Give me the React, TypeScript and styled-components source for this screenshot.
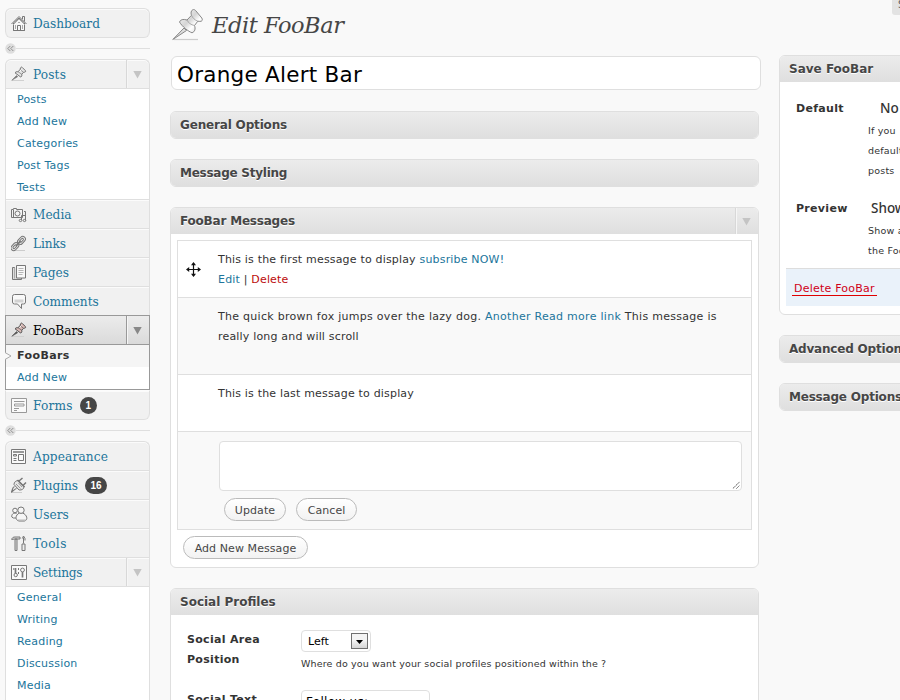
import React from "react";
import styled, { createGlobalStyle, css } from "styled-components";

const sans = `"DejaVu Sans", Verdana, sans-serif`;
const serif = `"DejaVu Serif Condensed", "DejaVu Serif", Georgia, serif`;
const blue = "#21759b";

const GlobalStyle = createGlobalStyle`
  * { box-sizing: border-box; }
  body {
    margin: 0;
    background: #f9f9f9;
    color: #333;
    font-family: ${sans};
    font-size: 11px;
    overflow: hidden;
  }
`;

const Page = styled.div`
  display: flex;
  width: 900px;
  height: 700px;
  overflow: hidden;
  position: relative;
`;

/* ---------- sidebar ---------- */

const Sidebar = styled.nav`
  flex: 0 0 145px;
  margin-left: 5px;
  padding-top: 8px;
`;

const Group = styled.div`
  border-bottom: 1px solid #dfdfdf;
  border-radius: 6px;
`;

const MenuRow = styled.div<{ $first?: boolean; $last?: boolean; $active?: boolean; $plainTop?: boolean }>`
  display: flex;
  align-items: center;
  height: 29px;
  padding-left: 5px;
  border: 1px solid #dfdfdf;
  border-bottom: 0;
  background: #f1f1f1;
  box-shadow: inset 0 1px 0 #fbfbfb;
  border-radius: ${(p) => (p.$first ? "6px 6px" : "0 0")} ${(p) => (p.$last ? "6px 6px" : "0 0")};
  ${(p) => p.$plainTop && css`border-top-color: #fcfcfc;`}
  ${(p) =>
    p.$active &&
    css`
      border-color: #999;
      background: linear-gradient(#ececec, #dadada);
      box-shadow: none;
    `}
`;

const IconSlot = styled.span`
  display: flex;
  align-items: center;
  width: 17px;
  height: 17px;
  margin-right: 5px;
`;

const MenuLabel = styled.span<{ $active?: boolean; $spacing?: number }>`
  font-family: ${serif};
  font-size: 13.5px;
  line-height: 26px;
  white-space: nowrap;
  letter-spacing: ${(p) => p.$spacing ?? 0}px;
  color: ${(p) => (p.$active ? "#000" : blue)};
`;

const Count = styled.span`
  display: flex;
  align-items: center;
  justify-content: center;
  min-width: 17px;
  height: 17px;
  margin-left: 7px;
  padding: 0 5.5px;
  border-radius: 9px;
  background: #464646;
  color: #fff;
  font: bold 10px "Liberation Sans", sans-serif;
`;

const Toggle = styled.span<{ $active?: boolean }>`
  display: flex;
  align-items: center;
  justify-content: center;
  align-self: stretch;
  width: 23px;
  margin-left: auto;
  padding: 2px 1px 0 0;
  border-left: 1px solid ${(p) => (p.$active ? "#999" : "#d8d8d8")};
  box-shadow: inset 1px 0 0 #f6f6f6;
  color: ${(p) => (p.$active ? "#888" : "#c4c4c4")};
`;

const Submenu = styled.div<{ $active?: boolean; $tail?: boolean }>`
  border: 1px solid ${(p) => (p.$active ? "#999" : "#dfdfdf")};
  ${(p) => !p.$active && css`border-bottom: 0;`}
  ${(p) => p.$tail && css`padding-bottom: 24px;`}
  background: #fff;
`;

const SubItem = styled.div<{ $current?: boolean }>`
  position: relative;
  height: 22px;
  padding-left: 11px;
  line-height: 21px;
  white-space: nowrap;
  letter-spacing: ${(p) => (p.$current ? 0.4 : 0.2)}px;
  color: ${(p) => (p.$current ? "#333" : blue)};
  font-weight: ${(p) => (p.$current ? "bold" : "normal")};
  background: ${(p) => (p.$current ? "#f5f5f5" : "transparent")};
`;

const CurrentNotch = styled.svg`
  position: absolute;
  left: -1px;
  top: 7px;
`;

const Separator = styled.div`
  display: flex;
  align-items: center;
  height: 21px;
  &::after {
    content: "";
    flex: 1;
    height: 1px;
    background: #dfdfdf;
  }
`;

/* ---------- main column ---------- */

const Main = styled.main`
  flex: 0 0 591px;
  margin-left: 20px;
`;

const Heading = styled.h1`
  display: flex;
  align-items: center;
  height: 56px;
  margin: 0;
  padding: 0 0 7px 2px;
  font-family: "DejaVu Serif", Georgia, serif;
  font-size: 22.5px;
  font-style: italic;
  font-weight: normal;
  letter-spacing: -0.45px;
  color: #464646;
  svg { margin-right: 8px; }
`;

const TitleInput = styled.div`
  width: 590px;
  height: 34px;
  margin: 0 0 21px 1px;
  padding-left: 5px;
  border: 1px solid #dfdfdf;
  border-radius: 6px;
  background: #fff;
  color: #000;
  font-size: 21.5px;
  letter-spacing: 0.25px;
  line-height: 35px;
`;

const Card = styled.section<{ $height?: number }>`
  width: 589px;
  ${(p) => p.$height && css`height: ${p.$height}px;`}
  margin-bottom: 20px;
  border: 1px solid #dfdfdf;
  border-radius: 6px;
  background: #fff;
  overflow: hidden;
`;

const CardHeader = styled.h3<{ $spacing?: number }>`
  display: flex;
  align-items: center;
  height: 26px;
  margin: 0;
  padding-left: 9px;
  background: linear-gradient(#ececec, #dfdfdf);
  color: #464646;
  font-size: 12px;
  line-height: 28px;
  white-space: nowrap;
  letter-spacing: ${(p) => p.$spacing ?? 0}px;
  text-shadow: 0 1px 0 #fff;
`;

const HeaderText = styled.span`
  padding-top: 1px;
  line-height: 25px;
`;

const Messages = styled.div`
  margin: 6px 6px 0;
  border: 1px solid #dfdfdf;
`;

const Message = styled.div<{ $height: number; $alt?: boolean }>`
  display: flex;
  height: ${(p) => p.$height}px;
  background: ${(p) => (p.$alt ? "#f9f9f9" : "#fff")};
  & + & { border-top: 1px solid #dfdfdf; }
`;

const Handle = styled.div`
  flex: 0 0 40px;
  padding: 21px 0 0 8px;
`;

const MessageText = styled.div`
  padding-top: 9px;
  width: 520px;
  line-height: 20px;
  letter-spacing: 0.18px;
`;

const WideLine = styled.span`
  letter-spacing: 0.28px;
`;

const Link = styled.a<{ $danger?: boolean }>`
  color: ${(p) => (p.$danger ? "#bc0b0b" : blue)};
`;

const Editor = styled.div`
  padding: 9px 0 0 1px;
`;

const TextArea = styled.div`
  display: flex;
  align-items: flex-end;
  justify-content: flex-end;
  width: 523px;
  height: 50px;
  padding: 0 1px 1px 0;
  border: 1px solid #dfdfdf;
  border-radius: 4px;
  background: #fff;
`;

const Buttons = styled.div`
  display: flex;
  gap: 10px;
  padding: 7px 0 0 5px;
`;

const Button = styled.button<{ $width: number }>`
  width: ${(p) => p.$width}px;
  height: 23px;
  padding: 1px 0 0;
  border: 1px solid #bbb;
  border-radius: 12px;
  background: linear-gradient(#fff, #f2f2f2);
  color: #464646;
  font: 11px ${sans};
  letter-spacing: 0.08px;
  white-space: nowrap;
`;

const CardFooter = styled.div`
  padding: 6px 0 0 12px;
`;

const Form = styled.div`
  display: grid;
  grid-template-columns: 114px 1fr;
  padding: 15px 0 0 16px;
`;

const FieldLabel = styled.div`
  width: 90px;
  font-weight: bold;
  line-height: 20px;
  letter-spacing: 0.3px;
`;

const Field = styled.div`
  height: 60px;
`;

const Select = styled.div`
  display: flex;
  align-items: center;
  justify-content: space-between;
  width: 70px;
  height: 22px;
  padding: 0 2px 0 6px;
  border: 1px solid #dfdfdf;
  border-radius: 4px;
  color: #000;
`;

const SelectButton = styled.span`
  display: flex;
  align-items: center;
  justify-content: center;
  width: 17px;
  height: 16px;
  padding-top: 2px;
  border: 1px solid #707070;
  background: linear-gradient(#f4f4f4 45%, #d5d5d5);
`;

const Hint = styled.p`
  margin: 2px 0 0;
  font-size: 9.5px;
  line-height: 20px;
  letter-spacing: 0.15px;
  white-space: nowrap;
`;

const TextInput = styled.div`
  width: 129px;
  height: 24px;
  padding-left: 4px;
  border: 1px solid #dfdfdf;
  border-radius: 4px;
  color: #000;
  font-size: 12px;
  letter-spacing: 0.3px;
  line-height: 22px;
`;

/* ---------- right column ---------- */

const Side = styled.aside`
  flex: 0 0 280px;
  margin-left: 18px;
  padding-top: 55px;
`;

const SideCard = styled(Card)`
  width: 280px;
`;

const SideBody = styled.div`
  padding-top: 16px;
`;

const SideRow = styled.div<{ $height: number }>`
  display: flex;
  height: ${(p) => p.$height}px;
  padding-left: 16px;
  line-height: 20px;
  white-space: nowrap;
`;

const SideLabel = styled.div`
  width: 72px;
  font-weight: bold;
  line-height: 21px;
  letter-spacing: 0.3px;
`;

const SideValue = styled.div<{ $indent: number }>`
  padding-left: ${(p) => p.$indent}px;
  font-family: "Noto Sans", sans-serif;
  font-size: 13.5px;
  font-weight: 500;
  line-height: 20px;
`;

const SideHint = styled.div`
  padding-top: 3px;
  font-size: 9.5px;
  letter-spacing: 0.2px;
  line-height: 20px;
`;

const DeleteBar = styled.div`
  height: 38px;
  margin: 0 6px 8px;
  padding: 11px 0 0 6px;
  border-top: 1px solid #ddd;
  background: #eaf2fa;
`;

const DeleteLink = styled.a`
  display: inline-block;
  height: 16px;
  padding: 0 2px;
  border-bottom: 1px solid #e00000;
  color: #d00018;
  line-height: 17px;
  letter-spacing: 0.22px;
`;

const ScreenTab = styled.div`
  position: absolute;
  top: 0;
  left: 892px;
  width: 90px;
  height: 15px;
  padding-left: 6px;
  border-radius: 0 0 0 3px;
  background: #e3e3e3;
  color: #606060;
  font-size: 10px;
  line-height: 9px;
  white-space: nowrap;
`;

/* ---------- drawings ---------- */

const Arrow = () => (
  <svg width="9" height="8" viewBox="0 0 9 8">
    <path d="M.3 0h8.400L4.500 7.600z" fill="currentColor" />
  </svg>
);

const Collapse = () => (
  <svg width="11" height="11" viewBox="0 0 11 11">
    <circle cx="5.5" cy="5.5" r="5.2" fill="#dedede" />
    <path d="M5.3 3L2.8 5.5l2.5 2.5M8.3 3L5.8 5.5l2.5 2.5" fill="none" stroke="#909090" />
  </svg>
);

const BigPin = () => (
  <svg width="32" height="32" viewBox="0 0 32 32">
    <defs>
      <linearGradient id="pinHead" x1="0" y1="0" x2="1" y2="1">
        <stop offset="0" stopColor="#fff" />
        <stop offset=".45" stopColor="#d5d5d5" />
        <stop offset=".65" stopColor="#fff" />
        <stop offset="1" stopColor="#ccc" />
      </linearGradient>
    </defs>
    <path d="M2 30.500h24" stroke="#ccc" strokeWidth="1.200" />
    <path d="M12 19L.8 30.500l13.700-9z" fill="#ddd" stroke="#888" />
    <path
      d="M19.500 2C21-.2 22.500.2 24 2l5.800 7c1.200 1.800.3 3.700-2 3.400l-2-.2-3.300 4.300c1.300 3.500.3 6.300-2.500 7.300C16.500 22.500 10 17.500 7.500 13c.8-2.500 3.800-3.200 7.500-2l4.500-4.700c-.6-1.500-.6-3 0-4.300z"
      fill="url(#pinHead)"
      stroke="#888"
    />
    <path d="M15 11c1 2.500 4 5 7.500 5.500M19.500 6.300c1 2.500 3.500 5 6.300 5.900" fill="none" stroke="#999" strokeWidth=".8" />
  </svg>
);

const SmallPin = ({ fill = "#e4e4e4", stroke = "#777" }) => (
  <svg width="16" height="16" viewBox="0 0 16 16">
    <path d="M1 14.500h12" stroke="#d0d0d0" />
    <path d="M5.500 9.500L.8 14.300l5.900-3.600z" fill={stroke} stroke={stroke} strokeWidth=".6" />
    <path
      d="M9.500 1.800q.7-1.300 1.700-.4l3.200 3.200q.8 1.200-.6 1.500l-1.300.2-1.700 1.900q.5 1.900-1 2.900L4 6.800q.7-1.400 2.900-1.100l2.200-2z"
      fill={fill}
      stroke={stroke}
      strokeWidth="1"
    />
    <path d="M7 5.700l3.800 2.600M9.300 3.700l3.200 2.600" stroke={stroke} strokeWidth=".7" />
    <path d="M8.500 5.500l2-1.800" stroke="#fff" />
  </svg>
);

const glyphs: Record<string, React.ReactNode> = {
  home: (
    <>
      <path d="M2.500 8v7.500h11V8L8 3z" fill="#f7f7f7" />
      <path d="M.5 9L8 1.500 15.500 9M2.500 8.500v7h11v-7M11.500 4V1.500h2v5M6.500 15v-4.500h3V15" />
      <path d="M2 10l6-6 6 6M7 7.500h2M4.500 10v4M11.500 10v4" stroke="#aaa" />
    </>
  ),
  media: (
    <>
      <path d="M.5 3.500h2v-1h3v1h6v8H.5z" fill="#f4f4f4" />
      <circle cx="6.500" cy="7.500" r="2.500" />
      <path d="M2.500 4v7M13 5.500h1.500v9M10.500 14V9.500h4" />
      <ellipse cx="9.500" cy="14.500" rx="1.300" ry="1.100" />
      <ellipse cx="13.500" cy="14.500" rx="1.300" ry="1.100" />
    </>
  ),
  links: (
    <>
      <path d="M3 15.500h11" stroke="#ccc" />
      <rect x="6" y="2.700" width="9" height="5.400" rx="2.700" transform="rotate(-47 10.500 5.400)" fill="#e8e8e8" />
      <rect x="-.6" y="8.900" width="9" height="5.400" rx="2.700" transform="rotate(-47 3.900 11.600)" fill="#e8e8e8" />
      <rect x="8.300" y="4.400" width="4.500" height="2" rx="1" transform="rotate(-47 10.500 5.400)" fill="#f6f6f6" />
      <rect x="1.600" y="10.600" width="4.500" height="2" rx="1" transform="rotate(-47 3.900 11.600)" fill="#f6f6f6" />
      <path d="M5 11l4.500-5" strokeWidth="1.800" />
    </>
  ),
  pages: (
    <>
      <path d="M4 3.500H1.500v12h9V14" fill="#ddd" />
      <path d="M3.500 14.500v-11" stroke="#aaa" />
      <path d="M5.500 1.500h9v12.500h-9z" fill="#f8f8f8" />
      <path d="M7.500 4.500h5M7.500 6.500h5M7.500 8.500h5M7.500 10.500h4" stroke="#b5b5b5" />
    </>
  ),
  comments: (
    <>
      <path d="M3.500 1.500h9q2 0 2 2v5.500q0 2-2 2h-2v4.500l-4-4.500h-3q-2 0-2-2V3.500q0-2 2-2z" fill="#f8f8f8" />
      <path d="M3.500 6.500h9v3h-9z" fill="#d2d2d2" stroke="none" />
    </>
  ),
  forms: (
    <>
      <path d="M.5 1.500h15v14H.5z" stroke="#999" fill="#fafafa" />
      <path d="M3 4.500h10.500M3 11.500h5M3 13.500h3" stroke="#999" />
      <path d="M3.500 7h9.500v2H3.500z" stroke="#999" />
    </>
  ),
  appearance: (
    <>
      <path d="M.5 1.500h14v14h-14z" fill="#fafafa" />
      <path d="M2 4h11" strokeWidth="1.500" />
      <path d="M2.500 6.500h3v1.500h-3zM2.500 10.500h3M2.500 12.500h3" />
      <path d="M7.500 6.500h5v6h-5z" />
    </>
  ),
  plugins: (
    <>
      <path d="M1 15.500h10" stroke="#ccc" />
      <path d="M3 7.500L8 13c3 .3 5-1 5-3.500L7.500 3.500C5 3.500 3 5 3 7.500z" fill="#e6e6e6" />
      <path d="M8 4l3.500-3M12 8.500L15 5.500M6.500 3l7 7" strokeWidth="1.500" />
      <path d="M3.500 9.500c-3 1.200-1 3-3.500 6M5.500 11.500C3.500 12 2.500 14 0 15.500" strokeWidth="1.200" />
      <path d="M5 7l4.500 4.500M7.500 6L11 10" stroke="#999" />
    </>
  ),
  users: (
    <>
      <circle cx="4" cy="4.500" r="2.300" fill="#f6f6f6" />
      <path d="M5.500 7.500C2 6.500.5 8.500.8 11q.7 1.500 4.500 1" fill="#f6f6f6" />
      <path d="M8.500 7c-4.500 2-4.500 7.200-.5 8h5.500c4-1 2.500-6.500-2-8z" fill="#f6f6f6" />
      <circle cx="10" cy="4.200" r="3.200" fill="#f6f6f6" />
      <path d="M7 14h8" stroke="#bbb" />
    </>
  ),
  tools: (
    <>
      <path d="M4 4h2v11.500H4zM.7 4.500C1 2.500 2.500 2 4 2h5v2H3.500z" fill="#ddd" />
      <path d="M11 9h3v6.500h-3zM12.500 8.500V2.500M11.300 3.500L12.500 1l1.500 2.500v2" fill="#eee" />
    </>
  ),
  settings: (
    <>
      <path d="M.5 1.500h15v14H.5z" fill="#fafafa" />
      <path d="M4.500 4v5.500M11.500 8v5.500" strokeWidth="1.700" />
      <circle cx="4.700" cy="11" r="1.700" />
      <circle cx="11.500" cy="6" r="1.900" />
      <path d="M7.500 4v2M7.500 8v2M2.800 4v2" />
    </>
  ),
};

const Glyph = ({ name }: { name: string }) => {
  if (name === "pin") return <SmallPin />;
  if (name === "pinActive") return <SmallPin fill="#d9b9b5" stroke="#555" />;
  return (
    <svg width="17" height="17" viewBox="0 0 17 17" fill="none" stroke="#777" strokeWidth="1">
      {glyphs[name]}
    </svg>
  );
};

const MoveIcon = () => (
  <svg width="15" height="15" viewBox="0 0 15 15">
    <path d="M7.500 1v13M1 7.500h13" stroke="#111" strokeWidth="1.200" />
    <path
      d="M7.500 0L10 3.200H5zM7.500 15L10 11.800H5zM0 7.500L3.200 5v5zM15 7.500L11.800 5v5z"
      fill="#111"
    />
  </svg>
);

const Grip = () => (
  <svg width="8" height="8" viewBox="0 0 9 9">
    <path d="M1 8.500L8.500 1M5 8.500L8.500 5" stroke="#333" strokeDasharray="1.200 .4" />
  </svg>
);

/* ---------- menu data ---------- */

type Item = {
  label: string;
  icon: string;
  count?: number;
  active?: boolean;
  spacing?: number;
  plainTop?: boolean;
  tail?: boolean;
  children?: string[];
};

const menu: Item[][] = [
  [{ label: "Dashboard", icon: "home" }],
  [
    { label: "Posts", icon: "pin", spacing: 0.15, children: ["Posts", "Add New", "Categories", "Post Tags", "Tests"] },
    { label: "Media", icon: "media" },
    { label: "Links", icon: "links", spacing: -0.1 },
    { label: "Pages", icon: "pages" },
    { label: "Comments", icon: "comments" },
    { label: "FooBars", icon: "pinActive", active: true, children: ["FooBars", "Add New"] },
    { label: "Forms", icon: "forms", count: 1, plainTop: true, spacing: 0.25 },
  ],
  [
    { label: "Appearance", icon: "appearance", spacing: 0.15 },
    { label: "Plugins", icon: "plugins", count: 16, spacing: -0.1 },
    { label: "Users", icon: "users" },
    { label: "Tools", icon: "tools", spacing: 0.4 },
    {
      label: "Settings",
      icon: "settings",
      spacing: -0.2,
      tail: true,
      children: ["General", "Writing", "Reading", "Discussion", "Media"],
    },
  ],
];

const MenuEntry = ({ item, first, last }: { item: Item; first: boolean; last: boolean }) => (
  <>
    <MenuRow $first={first} $last={last && !item.children} $active={item.active} $plainTop={item.plainTop}>
      <IconSlot>
        <Glyph name={item.icon} />
      </IconSlot>
      <MenuLabel $active={item.active} $spacing={item.spacing}>
        {item.label}
      </MenuLabel>
      {item.count && <Count>{item.count}</Count>}
      {item.children && (
        <Toggle $active={item.active}>
          <Arrow />
        </Toggle>
      )}
    </MenuRow>
    {item.children && (
      <Submenu $active={item.active} $tail={item.tail}>
        {item.children.map((child, i) => {
          const current = item.active && i === 0;
          return (
            <SubItem key={child} $current={current}>
              {current && (
                <CurrentNotch width="7" height="8" viewBox="0 0 7 8">
                  <path d="M0 .5L6 4 0 7.500z" fill="#f9f9f9" />
                  <path d="M0 .5L6 4 0 7.500" fill="none" stroke="#aaa" />
                </CurrentNotch>
              )}
              {child}
            </SubItem>
          );
        })}
      </Submenu>
    )}
  </>
);

export default function App() {
  return (
    <>
      <GlobalStyle />
      <Page>
        <Sidebar>
          {menu.map((group, g) => (
            <React.Fragment key={g}>
              {g > 0 && (
                <Separator>
                  <Collapse />
                </Separator>
              )}
              <Group>
                {group.map((item, i) => (
                  <MenuEntry key={item.label} item={item} first={i === 0} last={i === group.length - 1} />
                ))}
              </Group>
            </React.Fragment>
          ))}
        </Sidebar>

        <Main>
          <Heading>
            <BigPin />
            Edit FooBar
          </Heading>
          <TitleInput>Orange Alert Bar</TitleInput>

          <Card $height={28}>
            <CardHeader $spacing={-0.17}>
              <HeaderText>General Options</HeaderText>
            </CardHeader>
          </Card>
          <Card $height={28}>
            <CardHeader $spacing={-0.25}>
              <HeaderText>Message Styling</HeaderText>
            </CardHeader>
          </Card>

          <Card $height={361}>
            <CardHeader $spacing={-0.2}>
              <HeaderText>FooBar Messages</HeaderText>
              <Toggle>
                <Arrow />
              </Toggle>
            </CardHeader>
            <Messages>
              <Message $height={56}>
                <Handle>
                  <MoveIcon />
                </Handle>
                <MessageText>
                  This is the first message to display <Link>subsribe NOW!</Link>
                  <br />
                  <Link>Edit</Link> | <Link $danger>Delete</Link>
                </MessageText>
              </Message>
              <Message $height={77} $alt>
                <Handle />
                <MessageText>
                  <WideLine>
                    The quick brown fox jumps over the lazy dog. <Link>Another Read more link</Link> This message is
                  </WideLine>
                  <br />
                  really long and will scroll
                </MessageText>
              </Message>
              <Message $height={57}>
                <Handle />
                <MessageText>This is the last message to display</MessageText>
              </Message>
              <Message $height={98} $alt>
                <Handle />
                <Editor>
                  <TextArea>
                    <Grip />
                  </TextArea>
                  <Buttons>
                    <Button $width={62}>Update</Button>
                    <Button $width={61}>Cancel</Button>
                  </Buttons>
                </Editor>
              </Message>
            </Messages>
            <CardFooter>
              <Button $width={125}>Add New Message</Button>
            </CardFooter>
          </Card>

          <Card $height={200}>
            <CardHeader>
              <HeaderText>Social Profiles</HeaderText>
            </CardHeader>
            <Form>
              <FieldLabel>Social Area Position</FieldLabel>
              <Field>
                <Select>
                  Left
                  <SelectButton>
                    <svg width="7" height="4" viewBox="0 0 7 4">
                      <path d="M0 0h7L3.500 4z" fill="#000" />
                    </svg>
                  </SelectButton>
                </Select>
                <Hint>Where do you want your social profiles positioned within the ?</Hint>
              </Field>
              <FieldLabel>Social Text</FieldLabel>
              <Field>
                <TextInput>Follow us:</TextInput>
              </Field>
            </Form>
          </Card>
        </Main>

        <Side>
          <SideCard $height={260}>
            <CardHeader>
              <HeaderText>Save FooBar</HeaderText>
            </CardHeader>
            <SideBody>
              <SideRow $height={100}>
                <SideLabel>Default</SideLabel>
                <div>
                  <SideValue $indent={12}>No</SideValue>
                  <SideHint>
                    If you
                    <br />
                    default
                    <br />
                    posts
                  </SideHint>
                </div>
              </SideRow>
              <SideRow $height={70}>
                <SideLabel>Preview</SideLabel>
                <div>
                  <SideValue $indent={3}>Show</SideValue>
                  <SideHint>
                    Show a
                    <br />
                    the FooBar
                  </SideHint>
                </div>
              </SideRow>
              <DeleteBar>
                <DeleteLink>Delete FooBar</DeleteLink>
              </DeleteBar>
            </SideBody>
          </SideCard>
          <SideCard $height={28}>
            <CardHeader $spacing={-0.2}>
              <HeaderText>Advanced Options</HeaderText>
            </CardHeader>
          </SideCard>
          <SideCard $height={28}>
            <CardHeader $spacing={-0.2}>
              <HeaderText>Message Options</HeaderText>
            </CardHeader>
          </SideCard>
        </Side>
        <ScreenTab>Screen Options</ScreenTab>
      </Page>
    </>
  );
}
